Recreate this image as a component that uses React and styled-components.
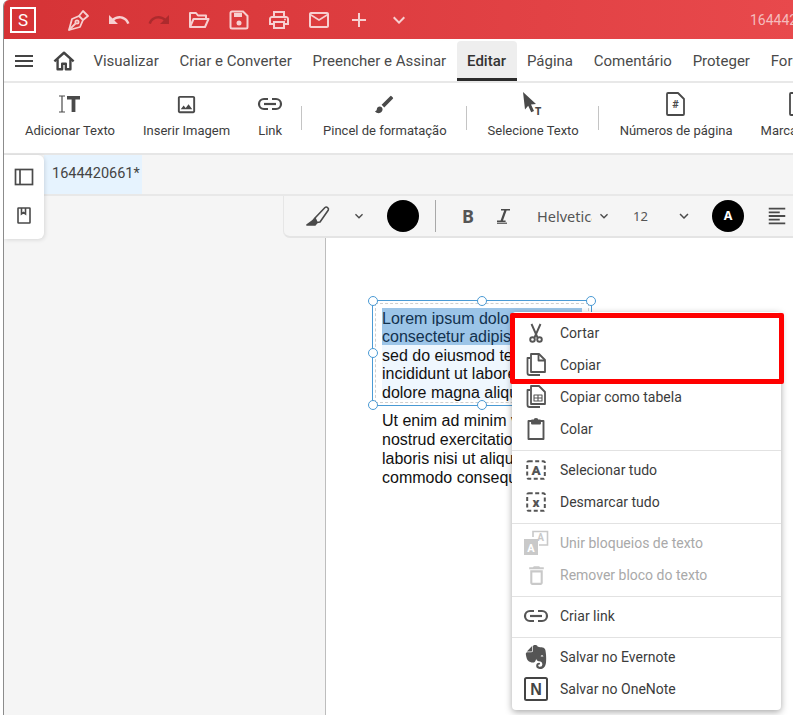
import React from 'react'
import styled, { createGlobalStyle } from 'styled-components'
import {
  MdOutlinePrint, MdOutlineEmail, MdAdd, MdExpandMore,
  MdUndo, MdRedo, MdMenu, MdOutlineImage, MdBrush, MdOutlineDelete,
  MdFormatAlignLeft,
} from 'react-icons/md'
import { SiEvernote } from 'react-icons/si'

const GlobalStyle = createGlobalStyle`
  html, body {
    margin: 0;
    height: 100%;
    background: #fff;
    overflow: hidden;
    font-family: Roboto, "Liberation Sans", sans-serif;
  }
`

const AppWindow = styled.div`
  position: relative;
  margin-left: 3px;
  width: 790px;
  height: 715px;
  border-left: 1px solid #8c8c8c;
  border-top-left-radius: 6px;
  overflow: hidden;
  display: flex;
  flex-direction: column;
`

const TitleBar = styled.div`
  height: 39px;
  flex: none;
  display: flex;
  align-items: center;
  padding-left: 6px;
  background: linear-gradient(90deg, #d53336, #e8494c);
  color: #f7cfd0;
`

const Logo = styled.div`
  width: 26px;
  height: 26px;
  flex: none;
  box-sizing: border-box;
  border: 2px solid #fff;
  color: #fff;
  font-size: 17px;
  line-height: 22px;
  text-align: center;
  margin-right: 23px;
`

const TitleIcon = styled.div`
  width: 40px;
  height: 39px;
  flex: none;
  display: flex;
  align-items: center;
  justify-content: center;
  font-size: ${p => p.$size || 24}px;
  color: ${p => (p.$dim ? '#ad2a2d' : 'inherit')};
`

const FileTitle = styled.div`
  margin-left: 331px;
  font-size: 14px;
  flex: none;
  color: #f5bcbd;
`

const TabBar = styled.div`
  height: 44px;
  flex: none;
  display: flex;
  align-items: flex-end;
  box-sizing: border-box;
  border-bottom: 2px solid #e8e8e8;
  white-space: nowrap;
  color: #444;
`

const TabTool = styled.div`
  width: ${p => p.$w}px;
  height: 40px;
  flex: none;
  display: flex;
  align-items: center;
  justify-content: center;
  color: #444;
`

const Tab = styled.div`
  height: 40px;
  flex: none;
  box-sizing: border-box;
  padding: 0 10.4px;
  line-height: 40px;
  font-size: 15px;
  font-weight: ${p => (p.$active ? 500 : 400)};
  color: ${p => (p.$active ? '#333' : '#4a4a4a')};
  background: ${p => (p.$active ? '#eee' : 'transparent')};
  border-bottom: 3px solid ${p => (p.$active ? '#2b2b2b' : 'transparent')};
  border-radius: 4px 4px 0 0;
  ${p => p.$active && 'padding: 0; width: 60px; text-align: center;'}
`

const Ribbon = styled.div`
  height: 72px;
  flex: none;
  box-sizing: border-box;
  border-bottom: 2px solid #e6e6e6;
  display: flex;
  padding-left: 7px;
  white-space: nowrap;
`

const RibbonItem = styled.div`
  flex: none;
  padding: 8px 14px 0;
  display: flex;
  flex-direction: column;
  align-items: center;
  font-size: 13px;
  color: #3d3d3d;
`

const RibbonIcon = styled.div`
  width: 0;
  height: 26px;
  margin-bottom: 6px;
  display: flex;
  align-items: center;
  justify-content: center;
  color: #4a4a4a;
  & > svg { flex: none; }
`

const RibbonSep = styled.div`
  width: 1px;
  height: 24px;
  flex: none;
  margin: 23px 7px 0 5px;
  background: #c4c4c4;
`

const DocTabs = styled.div`
  height: 41px;
  flex: none;
  box-sizing: border-box;
  padding-left: 40px;
  background: #f5f5f5;
  border-bottom: 2px solid #e8e8e8;
`

const DocTab = styled.div`
  width: 98px;
  height: 39px;
  box-sizing: border-box;
  padding-left: 8px;
  background: #e6f3fe;
  color: #444;
  font-size: 14.5px;
  line-height: 37px;
`

const SidePanel = styled.div`
  position: absolute;
  left: 0;
  top: 155px;
  width: 40px;
  height: 84px;
  z-index: 2;
  background: #fff;
  border-radius: 0 6px 6px 0;
  box-shadow: 1px 1px 4px rgba(0, 0, 0, 0.12);
  display: flex;
  flex-direction: column;
  align-items: center;
  color: #4a4a4a;
  padding-top: 13px;
  box-sizing: border-box;
  gap: 21px;
`

const Workspace = styled.div`
  flex: 1;
  background: #f5f5f5;
  display: flex;
  flex-direction: column;
`

const DocToolbar = styled.div`
  height: 42px;
  flex: none;
  box-sizing: border-box;
  margin-left: 279px;
  padding-left: 15px;
  background: #f5f5f5;
  border-left: 1px solid #e6e6e6;
  border-bottom: 2px solid #e4e4e4;
  border-bottom-left-radius: 7px;
  display: flex;
  align-items: center;
  white-space: nowrap;
  color: #4a4a4a;
`

const ToolCell = styled.div`
  width: ${p => p.$w}px;
  margin-left: ${p => p.$ml || 0}px;
  height: 32px;
  flex: none;
  display: flex;
  align-items: center;
  justify-content: center;
`

const ColorDot = styled.div`
  width: 32px;
  height: 32px;
  flex: none;
  border-radius: 50%;
  background: #000;
  color: #fff;
  font: 700 12.5px/32px "Noto Sans", sans-serif;
  text-align: center;
`

const ToolSep = styled.div`
  width: 1px;
  height: 32px;
  flex: none;
  margin-left: 8px;
  background: #a8a8a8;
`

const FontName = styled.div`
  width: 55px;
  margin-left: 17px;
  overflow: hidden;
  flex: none;
  font: 400 14.5px "Noto Sans", sans-serif;
  color: #555;
`

const FontSize = styled.div`
  width: 39px;
  margin-left: 17px;
  flex: none;
  font: 400 13px "Noto Sans", sans-serif;
  color: #555;
`

const Page = styled.div`
  flex: 1;
  margin-left: 321px;
  background: #fff;
  border-left: 1px solid #bdbdbd;
  padding: 62px 0 0 46px;
  font-family: "Liberation Sans", Arial, sans-serif;
  font-size: 16px;
  color: #111;
  white-space: nowrap;
`

const TextFrame = styled.div`
  position: relative;
  width: 220px;
  height: 106px;
  box-sizing: border-box;
  border: 1px solid #4a9ad4;
  padding: 7px 0 0 9px;
`

const FrameDash = styled.div`
  position: absolute;
  inset: 2px;
  border: 1px dashed #cfcfcf;
`

const Handle = styled.div`
  position: absolute;
  left: ${p => p.$x}%;
  top: ${p => p.$y}%;
  width: 10px;
  height: 10px;
  box-sizing: border-box;
  margin: -5px 0 0 -5px;
  background: #fff;
  border: 1px solid #4a9ad4;
  border-radius: 50%;
`

const FrameLine = styled.div`
  position: relative;
  width: 200px;
  height: 18.4px;
  line-height: 21px;
  background: ${p => (p.$sel ? '#9cc5e8' : '#eff7fe')};
  color: ${p => (p.$sel ? '#12324f' : '#111')};
`

const Paragraph = styled.div`
  margin: 5px 0 0 10px;
  line-height: 19px;
`

const Menu = styled.div`
  position: absolute;
  left: 508px;
  top: 312px;
  width: 269px;
  z-index: 3;
  box-sizing: border-box;
  padding: 5px 0;
  background: #fff;
  border-radius: 4px;
  box-shadow: 0 2px 7px rgba(0, 0, 0, 0.35);
`

const MenuRow = styled.div`
  height: 32px;
  display: flex;
  align-items: center;
  font-size: 14px;
  color: ${p => (p.$off ? '#a9a9a9' : '#3c3c3c')};
`

const MenuIcon = styled.div`
  width: 48px;
  height: 32px;
  flex: none;
  display: flex;
  align-items: center;
  justify-content: center;
  color: ${p => (p.$off ? '#c9c9c9' : '#555')};
`

const MenuLine = styled.div`
  height: 1px;
  margin: 5px 0 3px;
  background: #e2e2e2;
`

const RedMark = styled.div`
  position: absolute;
  left: -2px;
  top: 1px;
  width: 274px;
  height: 71px;
  box-sizing: border-box;
  border: 5px solid #f00;
  border-radius: 2px;
  pointer-events: none;
`

const PenIcon = () => (
  <svg width="24" height="24" viewBox="0 0 24 24" fill="none" stroke="currentColor" strokeWidth="1.8" strokeLinejoin="round">
    <path d="M2 22l3-11 7-3 4 4-3 7z" />
    <path d="M2 22l6.5-6.5" />
    <circle cx="10" cy="14" r="1.6" />
    <path d="M12 8l4-5 5 5-5 4" />
  </svg>
)

const FolderIcon = () => (
  <svg width="22" height="20" viewBox="0 0 22 20" fill="none" stroke="currentColor" strokeWidth="2" strokeLinejoin="round">
    <path d="M2 17V3h6l2 2.5h8V9" />
    <path d="M2 17h15l3.5-8H5.5z" />
  </svg>
)

const SaveIcon = () => (
  <svg width="20" height="20" viewBox="0 0 20 20">
    <path d="M3 1.5h11L18.5 6v11a1.5 1.5 0 0 1-1.5 1.5H3A1.5 1.5 0 0 1 1.5 17V3A1.5 1.5 0 0 1 3 1.5z" fill="none" stroke="currentColor" strokeWidth="2" />
    <rect x="5" y="3" width="8" height="4" fill="currentColor" />
    <circle cx="10" cy="13" r="2.5" fill="currentColor" />
  </svg>
)

const HomeIcon = () => (
  <svg width="22" height="22" viewBox="0 0 24 24" fill="none" stroke="currentColor" strokeWidth="2.6" strokeLinejoin="round">
    <path d="M1.5 12.5L12 3l10.5 9.5" />
    <path d="M5 10v11h5v-6h4v6h5V10" />
  </svg>
)

const AddTextIcon = () => (
  <svg width="26" height="22" viewBox="0 0 26 22">
    <path d="M2 3h6M2 19h6M5 3v16" stroke="currentColor" fill="none" strokeWidth="1.2" />
    <path d="M10 3h13v3.4h-4.6V19h-3.8V6.4H10z" fill="currentColor" />
  </svg>
)

const LinkIcon = () => (
  <svg width="26" height="14" viewBox="0 0 26 14" fill="none" stroke="currentColor" strokeWidth="2.2">
    <path d="M11 2H7a5 5 0 0 0 0 10h4" />
    <path d="M15 2h4a5 5 0 0 1 0 10h-4" />
    <path d="M7 7h12" />
  </svg>
)

const SelectTextIcon = () => (
  <svg width="22" height="24" viewBox="0 0 22 24">
    <path d="M1 0l13 12-5 .5 3 6.5-2.8 1.3-3-6.6L3 17.5z" fill="currentColor" />
    <text x="13" y="23" fontFamily="Roboto, sans-serif" fontWeight="900" fontSize="10" fill="currentColor">T</text>
  </svg>
)

const PageNumberIcon = () => (
  <svg width="22" height="24" viewBox="0 0 22 24">
    <path d="M3 1h10l6 6v15a1 1 0 0 1-1 1H3a1 1 0 0 1-1-1V2a1 1 0 0 1 1-1z" fill="none" stroke="currentColor" strokeWidth="1.8" strokeLinejoin="round" />
    <text x="10.5" y="16" textAnchor="middle" fontFamily="Roboto, sans-serif" fontWeight="700" fontSize="11" fill="currentColor">#</text>
  </svg>
)

const WatermarkIcon = () => (
  <svg width="22" height="24" viewBox="0 0 22 24" fill="none" stroke="currentColor" strokeWidth="1.8">
    <rect x="2" y="1" width="18" height="22" rx="1" />
    <path d="M6 7h2M6 12h2M6 17h2" />
  </svg>
)

const PanelIcon = () => (
  <svg width="20" height="18" viewBox="0 0 20 18" fill="none" stroke="currentColor" strokeWidth="1.7">
    <rect x="1.5" y="1.5" width="17" height="15" />
    <path d="M6 1.5v15" />
  </svg>
)

const BookmarkIcon = () => (
  <svg width="16" height="18" viewBox="0 0 16 18" fill="none" stroke="currentColor" strokeWidth="1.6">
    <rect x="2" y="1" width="12" height="15" rx="0.5" />
    <path d="M5.5 1v6l2-1.4 2 1.4V1" />
  </svg>
)

const MarkerIcon = () => (
  <svg width="26" height="24" viewBox="0 0 26 24" fill="none" stroke="currentColor" strokeWidth="1.6" strokeLinejoin="round">
    <path d="M9 14L19 3.5c1.5-1.4 4.4.6 3.2 2.8L14 18l-3 .5z" />
    <path d="M9 14l-2.5 3L1 21h8l2-2.5" fill="currentColor" />
  </svg>
)

const BoldGlyph = styled.span`
  font: 700 18px "Noto Sans", sans-serif;
  color: #555;
`

const ItalicIcon = () => (
  <svg width="14" height="16" viewBox="0 0 14 16">
    <path d="M4 1h9v1.5H9.6L6 12.5h2.6V14H0v-1.5h3.6l3.6-10H4z" fill="#4a4a4a" />
    <path d="M0 15.2h10" stroke="#4a4a4a" strokeWidth="1.2" />
  </svg>
)

const ScissorsIcon = () => (
  <svg width="16" height="20" viewBox="0 0 16 20" fill="none" stroke="currentColor" strokeWidth="1.9">
    <path d="M3.5 1l6 13.5M12.5 1l-6 13.5" />
    <circle cx="4.5" cy="16.5" r="2.3" />
    <circle cx="11.5" cy="16.5" r="2.3" />
  </svg>
)

const CopyIcon = () => (
  <svg width="22" height="24" viewBox="0 0 22 24" fill="none" stroke="currentColor" strokeWidth="1.8" strokeLinejoin="round">
    <path d="M5 5H2.5v15a2 2 0 0 0 2 2H15" />
    <path d="M6 1h8l6 6v12H6z" />
    <path d="M13.5 1v6.5H20" />
  </svg>
)

const TableCopyIcon = () => (
  <svg width="22" height="24" viewBox="0 0 22 24" fill="none" stroke="currentColor" strokeWidth="1.8" strokeLinejoin="round">
    <path d="M5 5H2.5v15a2 2 0 0 0 2 2H15" />
    <path d="M6 1h8l6 6v12H6z" />
    <path d="M9 10h8v6H9zM9 13h8M13 10v6" strokeWidth="1.1" />
  </svg>
)

const PasteIcon = () => (
  <svg width="20" height="24" viewBox="0 0 20 24" fill="none" stroke="currentColor" strokeWidth="1.9" strokeLinejoin="round">
    <path d="M6 4H2.5v18h15V4H14" />
    <path d="M6 6.5V3.5h2.5a1.5 1.5 0 0 1 3 0H14v3z" fill="currentColor" />
  </svg>
)

const BoxLetterIcon = ({ letter }) => (
  <svg width="20" height="20" viewBox="0 0 20 20" fill="none">
    <rect x="1.2" y="1.2" width="17.6" height="17.6" rx="1.5" stroke="currentColor" strokeWidth="2" strokeDasharray="4 2.5" />
    <text x="10" y="15" textAnchor="middle" fontFamily="Roboto, sans-serif" fontWeight="900" fontSize="13.5" fill="currentColor">{letter}</text>
  </svg>
)

const MergeIcon = () => (
  <svg width="26" height="26" viewBox="0 0 26 26" fill="none">
    <path d="M10 7V1.5h14.5V15H16" stroke="currentColor" strokeWidth="1.6" />
    <text x="17.5" y="11" textAnchor="middle" fontFamily="Roboto, sans-serif" fontWeight="700" fontSize="10" fill="currentColor">A</text>
    <rect x="1" y="9" width="14" height="16" fill="currentColor" />
    <text x="8" y="21.5" textAnchor="middle" fontFamily="Roboto, sans-serif" fontWeight="700" fontSize="11" fill="#fff">A</text>
  </svg>
)

const OneNoteIcon = () => (
  <svg width="24" height="24" viewBox="0 0 24 24" fill="none">
    <rect x="1" y="1" width="22" height="22" rx="1.5" stroke="#444" strokeWidth="2" />
    <text x="12" y="18" textAnchor="middle" fontFamily="Liberation Sans, sans-serif" fontWeight="700" fontSize="16" fill="#444">N</text>
  </svg>
)

const titleIcons = [
  { icon: <FolderIcon /> },
  { icon: <SaveIcon /> },
  { icon: <MdOutlinePrint /> },
  { icon: <MdOutlineEmail /> },
  { icon: <MdAdd /> },
  { icon: <MdExpandMore /> },
]

const tabs = ['Visualizar', 'Criar e Converter', 'Preencher e Assinar', 'Editar', 'Página', 'Comentário', 'Proteger', 'Formulário']

export default function App() {
  return (
    <>
      <GlobalStyle />
      <AppWindow>
        <TitleBar>
          <Logo>S</Logo>
          <TitleIcon><PenIcon /></TitleIcon>
          <TitleIcon><MdUndo size={24} /></TitleIcon>
          <TitleIcon $dim><MdRedo size={24} /></TitleIcon>
          {titleIcons.map((t, i) => <TitleIcon key={i}>{t.icon}</TitleIcon>)}
          <FileTitle>1644420661</FileTitle>
        </TitleBar>

        <TabBar>
          <TabTool $w={40}><MdMenu size={24} /></TabTool>
          <TabTool $w={39}><HomeIcon /></TabTool>
          {tabs.map(t => <Tab key={t} $active={t === 'Editar'}>{t}</Tab>)}
        </TabBar>

        <Ribbon>
          <RibbonItem><RibbonIcon><AddTextIcon /></RibbonIcon>Adicionar Texto</RibbonItem>
          <RibbonItem><RibbonIcon><MdOutlineImage size={23} /></RibbonIcon>Inserir Imagem</RibbonItem>
          <RibbonItem><RibbonIcon><LinkIcon /></RibbonIcon>Link</RibbonItem>
          <RibbonSep />
          <RibbonItem><RibbonIcon><MdBrush size={23} /></RibbonIcon>Pincel de formatação</RibbonItem>
          <RibbonSep />
          <RibbonItem><RibbonIcon><SelectTextIcon /></RibbonIcon>Selecione Texto</RibbonItem>
          <RibbonSep />
          <RibbonItem><RibbonIcon><PageNumberIcon /></RibbonIcon>Números de página</RibbonItem>
          <RibbonItem><RibbonIcon><WatermarkIcon /></RibbonIcon>Marca d'água</RibbonItem>
        </Ribbon>

        <DocTabs><DocTab>1644420661*</DocTab></DocTabs>

        <SidePanel>
          <PanelIcon />
          <BookmarkIcon />
        </SidePanel>

        <Workspace>
          <DocToolbar>
            <ToolCell $w={40}><MarkerIcon /></ToolCell>
            <ToolCell $w={40}><MdExpandMore size={16} /></ToolCell>
            <ToolCell $w={48}><ColorDot /></ToolCell>
            <ToolSep />
            <ToolCell $w={40} $ml={12}><BoldGlyph>B</BoldGlyph></ToolCell>
            <ToolCell $w={32}><ItalicIcon /></ToolCell>
            <FontName>Helvetica</FontName>
            <ToolCell $w={24}><MdExpandMore size={16} /></ToolCell>
            <FontSize>12</FontSize>
            <ToolCell $w={24}><MdExpandMore size={18} /></ToolCell>
            <ToolCell $w={32} $ml={16}><ColorDot>A</ColorDot></ToolCell>
            <ToolCell $w={22} $ml={22}><MdFormatAlignLeft size={24} /></ToolCell>
          </DocToolbar>

          <Page>
            <TextFrame>
              <FrameDash />
              <FrameLine $sel>Lorem ipsum dolor sit amet,</FrameLine>
              <FrameLine $sel>consectetur adipiscing elit,</FrameLine>
              <FrameLine>sed do eiusmod tempor</FrameLine>
              <FrameLine>incididunt ut labore et</FrameLine>
              <FrameLine>dolore magna aliqua.</FrameLine>
              <Handle $x={0} $y={0} />
              <Handle $x={50} $y={0} />
              <Handle $x={100} $y={0} />
              <Handle $x={0} $y={50} />
              <Handle $x={0} $y={100} />
              <Handle $x={50} $y={100} />
              <Handle $x={100} $y={100} />
            </TextFrame>
            <Paragraph>
              Ut enim ad minim veniam, quis<br />
              nostrud exercitation ullamco<br />
              laboris nisi ut aliquip ex ea<br />
              commodo consequat.
            </Paragraph>
          </Page>
        </Workspace>

        <Menu>
          <RedMark />
          <MenuRow><MenuIcon><ScissorsIcon /></MenuIcon>Cortar</MenuRow>
          <MenuRow><MenuIcon><CopyIcon /></MenuIcon>Copiar</MenuRow>
          <MenuRow><MenuIcon><TableCopyIcon /></MenuIcon>Copiar como tabela</MenuRow>
          <MenuRow><MenuIcon><PasteIcon /></MenuIcon>Colar</MenuRow>
          <MenuLine />
          <MenuRow><MenuIcon><BoxLetterIcon letter="A" /></MenuIcon>Selecionar tudo</MenuRow>
          <MenuRow><MenuIcon><BoxLetterIcon letter="x" /></MenuIcon>Desmarcar tudo</MenuRow>
          <MenuLine />
          <MenuRow $off><MenuIcon $off><MergeIcon /></MenuIcon>Unir bloqueios de texto</MenuRow>
          <MenuRow $off><MenuIcon $off><MdOutlineDelete size={25} /></MenuIcon>Remover bloco do texto</MenuRow>
          <MenuLine />
          <MenuRow><MenuIcon><LinkIcon /></MenuIcon>Criar link</MenuRow>
          <MenuLine />
          <MenuRow><MenuIcon><SiEvernote size={24} /></MenuIcon>Salvar no Evernote</MenuRow>
          <MenuRow><MenuIcon><OneNoteIcon /></MenuIcon>Salvar no OneNote</MenuRow>
        </Menu>
      </AppWindow>
    </>
  )
}
